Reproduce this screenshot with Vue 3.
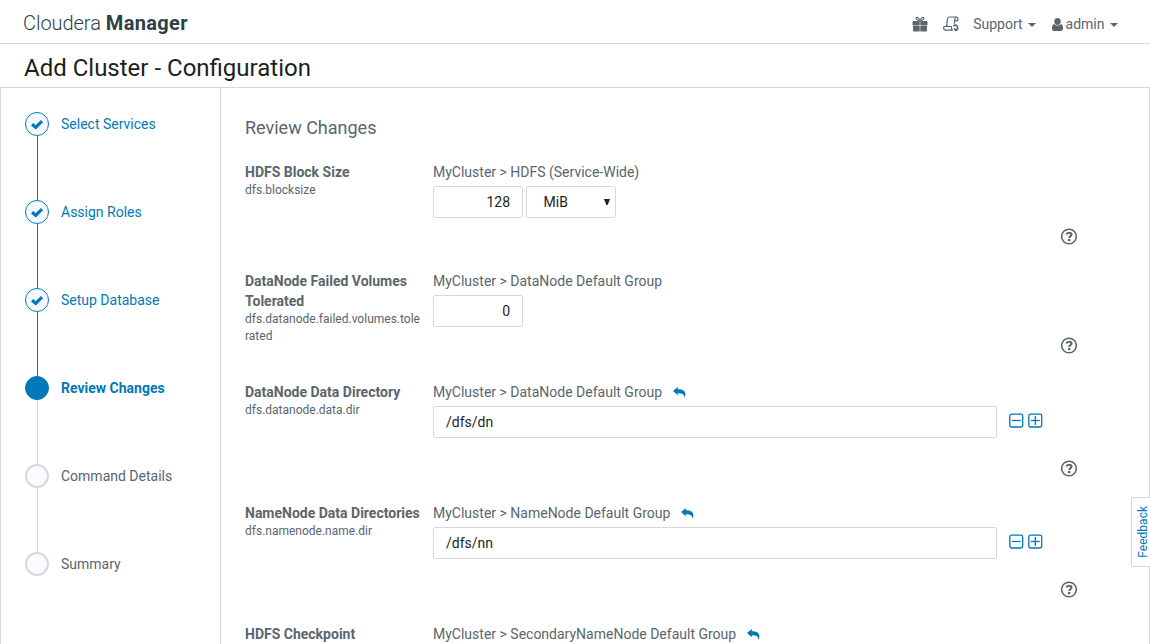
<script setup>
const steps = [
  { label: 'Select Services', state: 'done' },
  { label: 'Assign Roles', state: 'done' },
  { label: 'Setup Database', state: 'done' },
  { label: 'Review Changes', state: 'current' },
  { label: 'Command Details', state: 'todo' },
  { label: 'Summary', state: 'todo' },
]
const rows = [
  { name: 'HDFS Block Size', prop: 'dfs.blocksize', scope: 'HDFS (Service-Wide)', num: '128', unit: 'MiB', size: 'short' },
  { name: 'DataNode Failed Volumes Tolerated', prop: 'dfs.datanode.failed.volumes.tolerated', scope: 'DataNode Default Group', num: '0', size: 'medium' },
  { name: 'DataNode Data Directory', prop: 'dfs.datanode.data.dir', scope: 'DataNode Default Group', path: '/dfs/dn', size: 'tall' },
  { name: 'NameNode Data Directories', prop: 'dfs.namenode.name.dir', scope: 'NameNode Default Group', path: '/dfs/nn', size: 'tall' },
  { name: 'HDFS Checkpoint', scope: 'SecondaryNameNode Default Group', revert: true, size: 'last' },
]
</script>

<template>
  <div class="page">
    <header class="topbar">
      <div class="brand"><span class="brand-light">Cloudera</span><span class="brand-bold">Manager</span></div>
      <nav class="nav">
        <svg class="gift" width="16" height="16" viewBox="0 0 16 16">
          <path d="M1 5h6.700v4.200H.5V6zM8.300 5H15l.5 1v3.200H8.300zM1 9.700h6.700v5.800H1.800l-.8-.8zM8.300 9.700H15v5l-.8.8H8.300z" fill="#5a656d" />
          <path d="M7.600 4.700C6.800 2 5 .7 4.300 1.700 3.500 3 5.200 4.500 7.600 4.700zm.8 0C9.200 2 11 .7 11.700 1.700c.8 1.300-.9 2.800-3.300 3z" fill="none" stroke="#5a656d" stroke-width="1.200" />
        </svg>
        <svg class="scroll" width="16" height="16" viewBox="0 0 16 16" fill="none" stroke="#5a656d" stroke-width="1.200">
          <path d="M3.500 10.500C4.500 8 3.800 4 4.600 2.200 5 1.200 5.600 1 6.300 1h7c1.500 0 2 1.500 1.300 3.700h-2.800M13 1.100c-1.500.5-1.200 4-1.700 6.600M8.500 10.500H1.300c-1 0-1 3.600 1.200 3.600h7M8.500 10.500c-.3 1.500.2 2.800 1.200 3.600" />
          <path d="M10.300 10.300c1-1.500 3-1.500 3.900-.2 1 1.500.4 3.700-1.300 4.200M11.200 12.300l1.400 2.200 2.500-1.200" stroke-width="1.600" />
        </svg>
        <span class="menu support">Support<i class="caret"></i></span>
        <span class="menu">
          <svg class="user" width="11" height="13" viewBox="0 0 10 12" preserveAspectRatio="none"><path d="M5 0c1.900 0 3 1.200 3 3.100S6.800 6.600 5 6.600 2 5 2 3.100 3.100 0 5 0zM2 5.500C3.500 7.600 6.500 7.600 8 5.500 9.600 5.900 10 7.600 10 10c0 1.300-.8 2-1.900 2H1.900C.8 12 0 11.300 0 10c0-2.400.4-4.100 2-4.500z" fill="#5a656d" /></svg>
          admin<i class="caret"></i>
        </span>
      </nav>
    </header>
    <h1 class="title">Add Cluster - Configuration</h1>
    <div class="body">
      <aside class="steps">
        <div v-for="s in steps" :key="s.label" class="step" :class="s.state">
          <span class="dot">
            <svg v-if="s.state === 'done'" width="14" height="12" viewBox="0 0 14 12"><path d="M2 6.200 5.700 9.300 12 3.200" fill="none" stroke="#0079b8" stroke-width="3.100" /></svg>
          </span>
          <span class="step-label">{{ s.label }}</span>
        </div>
      </aside>
      <main class="content">
        <h2>Review Changes</h2>
        <section v-for="r in rows" :key="r.name" class="row" :class="r.size">
          <div class="label">
            <div class="name">{{ r.name }}</div>
            <div v-if="r.prop" class="prop">{{ r.prop }}</div>
          </div>
          <div class="value">
            <div class="scope">MyCluster &gt; {{ r.scope }}
              <svg v-if="r.path || r.revert" class="reply" width="13" height="11" viewBox="0 0 13 11"><path d="M0 4 4.800 0v2.200c5 0 7.600 1.800 7.600 5.300 0 1.200-.3 2.300-1 3.300.1-3.300-2-4.600-6.600-4.600v2.100z" fill="#0079b8" /></svg>
            </div>
            <div v-if="r.num || r.path" class="controls">
              <span v-if="r.num" class="field num">{{ r.num }}</span>
              <span v-if="r.unit" class="field select">{{ r.unit }}<svg width="6" height="6" viewBox="0 0 6 6"><path d="M0 0h6L3.600 6H2.400z" fill="#1b1f23" /></svg></span>
              <span v-if="r.path" class="field path">{{ r.path }}</span>
            </div>
          </div>
          <div class="actions">
            <template v-if="r.path">
              <svg v-for="k in 2" :key="k" width="15" height="15" viewBox="0 0 15 15" fill="none" stroke="#0079b8" stroke-width="1.300">
                <rect x=".8" y="1.100" width="12.900" height="12.900" rx="1.800" />
                <path d="M2.800 7.500h9" />
                <path v-if="k === 2" d="M7.300 3v9" />
              </svg>
            </template>
          </div>
          <svg v-if="r.num || r.path" class="help" width="16" height="17" viewBox="0 0 16 17" fill="none">
            <circle cx="8" cy="8.500" r="7.300" stroke="#5a656d" stroke-width="1.500" />
            <path d="M5.400 6.500C5.800 5.200 6.700 4.700 8 4.700c1.500 0 2.500.8 2.500 1.900 0 1.700-2.300 1.600-2.300 3.500" stroke="#5a656d" stroke-width="2.100" />
            <path d="M7 11h2.300v2.200H7z" fill="#5a656d" />
          </svg>
        </section>
      </main>
    </div>
    <div class="feedback">Feedback</div>
  </div>
</template>

<style>
body { margin: 0; overflow: hidden; background: #fff; }
</style>
<style scoped>
.page { width: 1150px; height: 644px; overflow: hidden; position: relative; display: flex; flex-direction: column; font: 14px/20px Roboto, "Liberation Sans", sans-serif; color: #5a656d; box-sizing: border-box; }
.page * { box-sizing: border-box; }
.topbar { height: 44px; flex: none; border-bottom: 1px solid #d6d8dc; display: flex; justify-content: space-between; padding: 0 32px 0 23px; }
.brand { display: flex; gap: 5px; font-size: 20px; line-height: 47px; color: #2f3e46; }
.brand-light { font-weight: 300; letter-spacing: -.05px; }
.brand-bold { font-weight: 700; letter-spacing: .35px; }
.nav { display: flex; align-items: center; padding-top: 5px; }
.gift { margin-right: 15px; }
.scroll { margin-right: 14.500px; }
.menu { display: flex; align-items: center; }
.support { margin-right: 15.500px; }
.caret { border: 4px solid transparent; border-top-color: #5a656d; border-bottom: 0; margin-left: 5.500px; margin-top: 1px; }
.user { margin-right: 3px; }
.title { margin: 0; height: 43px; flex: none; padding-left: 24px; font-size: 24px; line-height: 48px; font-weight: 400; color: #1b1f23; }
.body { flex: 1; min-height: 0; display: flex; border: 1px solid #d6d8dc; border-bottom: 0; overflow: hidden; }
.steps { width: 220px; flex: none; border-right: 1px solid #d6d8dc; padding: 24px 0 0 24px; }
.step { height: 88px; display: flex; position: relative; }
.step:not(:last-child)::after { content: ""; position: absolute; left: 12px; top: 24px; height: 64px; width: 1px; background: #0079b8; }
.step.current::after, .step.todo::after { background: #d6d8dc !important; }
.dot { width: 24px; height: 24px; border-radius: 50%; display: flex; align-items: center; justify-content: center; border: 1px solid #0079b8; background: #f5f9fe; }
.current .dot { background: #0079b8; }
.todo .dot { border: 2px solid #d6d8dc; background: #fafbfe; }
.step-label { margin-left: 12px; line-height: 24px; }
.done, .current { color: #0079b8; }
.current { font-weight: 700; }
.content { flex: 1; padding: 28px 0 0 24px; }
h2 { margin: 0 0 22px; font-size: 18px; line-height: 24px; font-weight: 400; }
.row { display: grid; grid-template-columns: 176px 564px 34px 16px; column-gap: 12px; align-items: start; }
.short { height: 109px; }
.medium { height: 111px; }
.tall { height: 121px; }
.last { height: 20px; }
.name { font-weight: 700; }
.prop { font-size: 12px; line-height: 17px; overflow-wrap: anywhere; }
.label { width: 176px; }
.scope { display: flex; align-items: center; white-space: nowrap; }
.reply { margin-left: 11px; margin-top: 1px; }
.controls { display: flex; gap: 3px; margin-top: 4px; }
.field { height: 32px; border: 1px solid #d6d8dc; border-radius: 2px; padding: 0 12px; line-height: 30px; color: #1b1f23; background: #fff; }
.num { width: 90px; text-align: right; }
.select { width: 90px; padding: 0 5px 0 16.500px; display: flex; align-items: center; justify-content: space-between; }
.path { width: 564px; }
.actions { display: flex; gap: 4px; padding-top: 31px; }
.help { margin: 66px 0 0 6px; }
.tall .help { margin-top: 78px; }
.feedback { position: absolute; right: 0; top: 497px; width: 19px; height: 70px; border: 1px solid #d6d8dc; border-right: 0; border-radius: 2px 0 0 2px; background: #fff; color: #0079b8; font-size: 12px; line-height: 22px; text-align: center; writing-mode: sideways-lr; }
</style>
